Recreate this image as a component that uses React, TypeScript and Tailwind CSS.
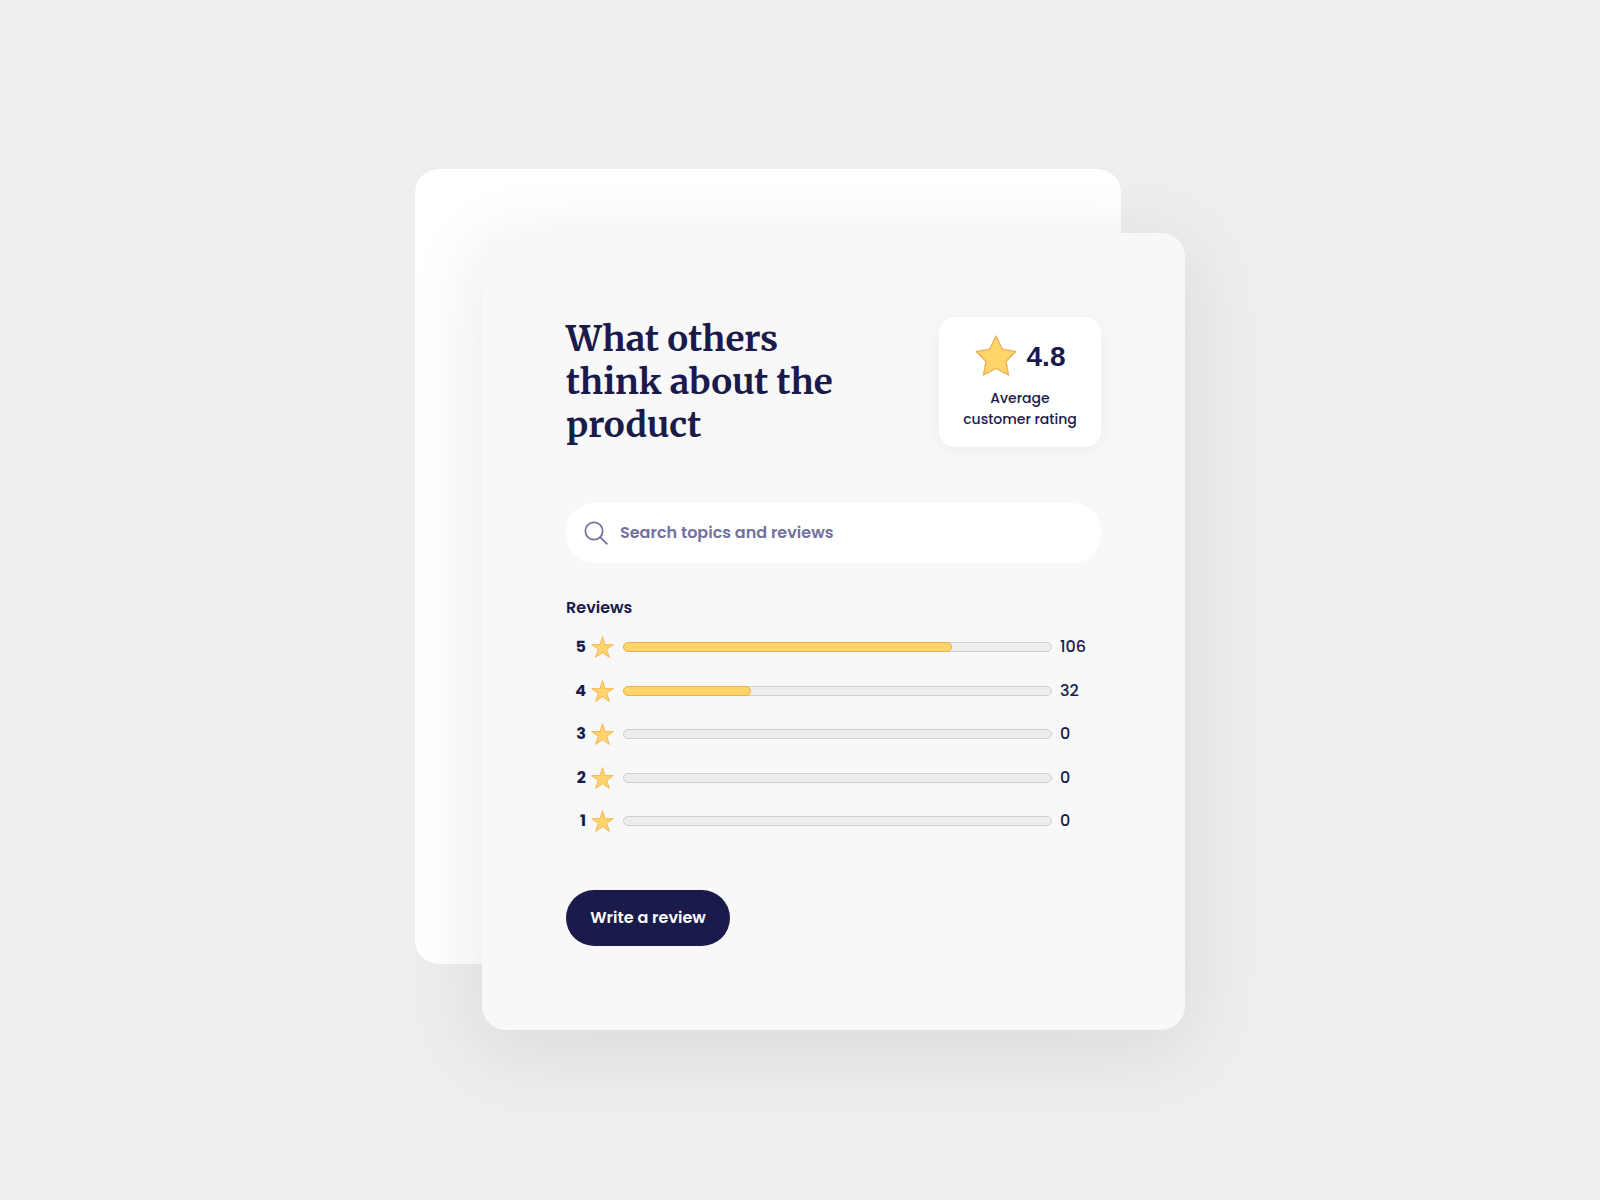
import React from "react";

type Rating = { stars: number; count: number; fill: string };

const ratings: Rating[] = [
  { stars: 5, count: 106, fill: "77%" },
  { stars: 4, count: 32, fill: "30%" },
  { stars: 3, count: 0, fill: "0%" },
  { stars: 2, count: 0, fill: "0%" },
  { stars: 1, count: 0, fill: "0%" },
];

function LargeStar() {
  return (
    <svg aria-hidden="true" viewBox="0 0 126 124" className="h-[41px] w-[42px] shrink-0">
      <path
        d="M63 3 L82 43 L123 50 L93 80 L101 121 L63 101 L25 121 L33 80 L3 50 L44 43 Z"
        fill="#ffd56b"
        stroke="#eeb050"
        strokeWidth="4"
        strokeLinejoin="round"
      />
    </svg>
  );
}

function SmallStar() {
  return (
    <svg aria-hidden="true" viewBox="0 0 69 66" className="h-[22px] w-[23px] shrink-0">
      <path
        d="M34.500 2 L42 26 L67 26 L47 40 L55 64 L34.500 50 L14 64 L22 40 L2 26 L27 26 Z"
        fill="#ffd56b"
        stroke="#f4b656"
        strokeWidth="3"
        strokeLinejoin="round"
      />
    </svg>
  );
}

function SearchIcon() {
  return (
    <svg
      aria-hidden="true"
      viewBox="0 0 24 24"
      className="h-6 w-6 shrink-0"
      fill="none"
      stroke="#7171a0"
      strokeWidth="1.7"
    >
      <circle cx="10" cy="10" r="8.7" />
      <path d="M16.200 16.200 L23.400 23.400" />
    </svg>
  );
}

function RatingRow({ stars, count, fill }: Rating) {
  return (
    <li className="flex items-center leading-[26px]">
      <span className="mr-[5px] w-5 text-right font-bold">{stars}</span>
      <SmallStar />
      <div className="ml-[9px] h-2.5 flex-1 rounded-full border border-[#cfcfcf] bg-[#ededed]">
        {count > 0 && (
          <div
            className="-m-px h-2.5 rounded-full border border-[#f2b04c] bg-[#ffd56b]"
            style={{ width: fill }}
          />
        )}
      </div>
      <span className="ml-2 w-[41px] font-medium">{count}</span>
    </li>
  );
}

export default function App() {
  return (
    <main className="flex min-h-screen items-center justify-center bg-[#eeeeee] pb-px font-['Poppins','Inter',sans-serif] text-base leading-6 text-[#1a1b4b]">
      <div className="relative w-full max-w-[770px] pt-16 pl-[67px]">
        <div className="absolute top-0 right-16 bottom-[66px] left-0 rounded-3xl bg-white" />
        <section className="relative rounded-3xl bg-[#f8f8f8] p-[84px] shadow-[0_16px_80px_rgba(26,32,70,0.10)]">
          <header className="flex items-end justify-between">
            <h1 className="w-[290px] font-['Merriweather','Liberation_Serif',serif] text-[35px] leading-[43px] font-bold">
              What others think about the product
            </h1>
            <div className="flex w-[162px] flex-col items-center rounded-2xl bg-white pt-4 pb-[17px] shadow-[0_4px_20px_rgba(26,27,75,0.05)]">
              <div className="flex items-center gap-2.5">
                <LargeStar />
                <span className="pt-1 font-['Liberation_Sans',sans-serif] text-[28px] leading-10 font-bold">
                  4.8
                </span>
              </div>
              <p className="mt-[11px] text-center text-sm leading-[21px] font-medium">
                Average
                <br />
                customer rating
              </p>
            </div>
          </header>

          <label className="mt-14 flex h-[60px] items-center gap-3 rounded-[28px] bg-white px-[18px]">
            <SearchIcon />
            <input
              type="text"
              aria-label="Search topics and reviews"
              placeholder="Search topics and reviews"
              className="min-w-0 flex-1 bg-transparent font-semibold outline-none placeholder:text-[#7171a0] placeholder:opacity-100"
            />
          </label>

          <h2 className="mt-8 leading-[26px] font-semibold">Reviews</h2>
          <ul className="mt-[13px] mb-14 flex h-[200px] flex-col justify-between">
            {ratings.map((rating) => (
              <RatingRow key={rating.stars} {...rating} />
            ))}
          </ul>

          <button
            type="button"
            className="h-14 w-[164px] rounded-full bg-[#1a1b4b] font-semibold text-white"
          >
            Write a review
          </button>
        </section>
      </div>
    </main>
  );
}
